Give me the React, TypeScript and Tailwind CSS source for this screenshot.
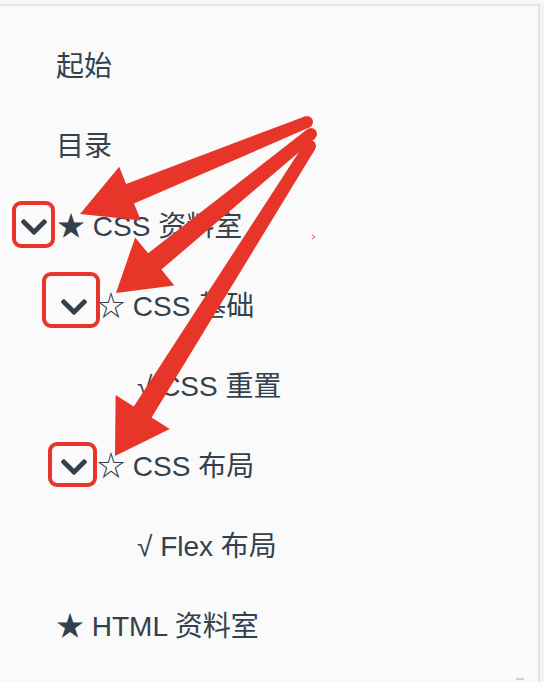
import React from "react";

type Row = { text: string; pad: string; chevron?: boolean };

const rows: Row[] = [
  { text: "起始", pad: "pl-[56px]" },
  { text: "目录", pad: "pl-[56px]" },
  { text: "★ CSS 资料室", pad: "pl-[21px]", chevron: true },
  { text: "☆ CSS 基础", pad: "pl-[61px]", chevron: true },
  { text: "√ CSS 重置", pad: "pl-[137px]" },
  { text: "☆ CSS 布局", pad: "pl-[61px]", chevron: true },
  { text: "√ Flex 布局", pad: "pl-[137px]" },
  { text: "★ HTML 资料室", pad: "pl-[56px]" },
];

function Chevron() {
  return (
    <svg width="26" height="16" viewBox="5 123 438 266" className="mr-[10px] shrink-0">
      <path
        fill="#34404d"
        d="M207.029 381.476L12.686 187.132c-9.373-9.373-9.373-24.569 0-33.941l22.667-22.667c9.357-9.357 24.522-9.375 33.901-.04L224 284.505l154.745-154.021c9.379-9.335 24.544-9.317 33.901.04l22.667 22.667c9.373 9.373 9.373 24.569 0 33.941L240.971 381.476c-9.373 9.372-24.569 9.372-33.942 0z"
      />
    </svg>
  );
}

function arrowPoints(
  sx: number,
  sy: number,
  tx: number,
  ty: number,
  tailW: number,
  baseW: number,
  headLen: number,
  headHalf: number
) {
  const dx = tx - sx;
  const dy = ty - sy;
  const len = Math.hypot(dx, dy);
  const ux = dx / len;
  const uy = dy / len;
  const nx = -uy;
  const ny = ux;
  const bx = tx - ux * headLen;
  const by = ty - uy * headLen;
  const pts = [
    [sx + (nx * tailW) / 2, sy + (ny * tailW) / 2],
    [bx + (nx * baseW) / 2, by + (ny * baseW) / 2],
    [bx + nx * headHalf, by + ny * headHalf],
    [tx, ty],
    [bx - nx * headHalf, by - ny * headHalf],
    [bx - (nx * baseW) / 2, by - (ny * baseW) / 2],
    [sx - (nx * tailW) / 2, sy - (ny * tailW) / 2],
  ];
  return pts.map((p) => `${p[0].toFixed(1)},${p[1].toFixed(1)}`).join(" ");
}

const arrows = [
  { sx: 307, sy: 122, tx: 80, ty: 214, hl: 54, hh: 29 },
  { sx: 311, sy: 134, tx: 116, ty: 293, hl: 50, hh: 31 },
  { sx: 310, sy: 146, tx: 115, ty: 456, hl: 52, hh: 32 },
];

const RED = "#e8352a";

export default function App() {
  return (
    <div className="relative w-[544px] h-[682px] overflow-hidden bg-[#f3f3f3] flex flex-col">
      <div className="h-[4px] shrink-0 bg-[#f7f7f7]" />
      <div className="flex-1 w-[540px] bg-[#fafafa] border-t-2 border-r-2 border-[#e4e4e4] pt-[21px]">
        {rows.map((r, i) => (
          <div
            key={i}
            className={`h-[80px] flex items-center ${r.pad} text-[28px] leading-none text-[#34404c] whitespace-pre`}
            style={{ fontFamily: '"Liberation Sans", "Noto Sans CJK SC", sans-serif' }}
          >
            {r.chevron && <Chevron />}
            <span>{r.text}</span>
          </div>
        ))}
      </div>

      <svg className="absolute inset-0 pointer-events-none" width="544" height="682">
        <rect x="14" y="203" width="39" height="43" rx="7" fill="none" stroke={RED} strokeWidth="4" />
        <rect x="44" y="274" width="54" height="52" rx="7" fill="none" stroke={RED} strokeWidth="4" />
        <rect x="50" y="444" width="45" height="41" rx="7" fill="none" stroke={RED} strokeWidth="4" />
        {arrows.map((a, i) => (
          <g key={i}>
            <polygon points={arrowPoints(a.sx, a.sy, a.tx, a.ty, 12, 21, a.hl, a.hh)} fill={RED} />
            <circle cx={a.sx} cy={a.sy} r="6" fill={RED} />
          </g>
        ))}
        <path d="M312 235 L315 237 L312 239" fill="none" stroke={RED} strokeWidth="0.8" />
      </svg>
      <div className="absolute left-[516px] top-[678px] w-[8px] h-[2px] bg-[#cfcfcf]" />
    </div>
  );
}
